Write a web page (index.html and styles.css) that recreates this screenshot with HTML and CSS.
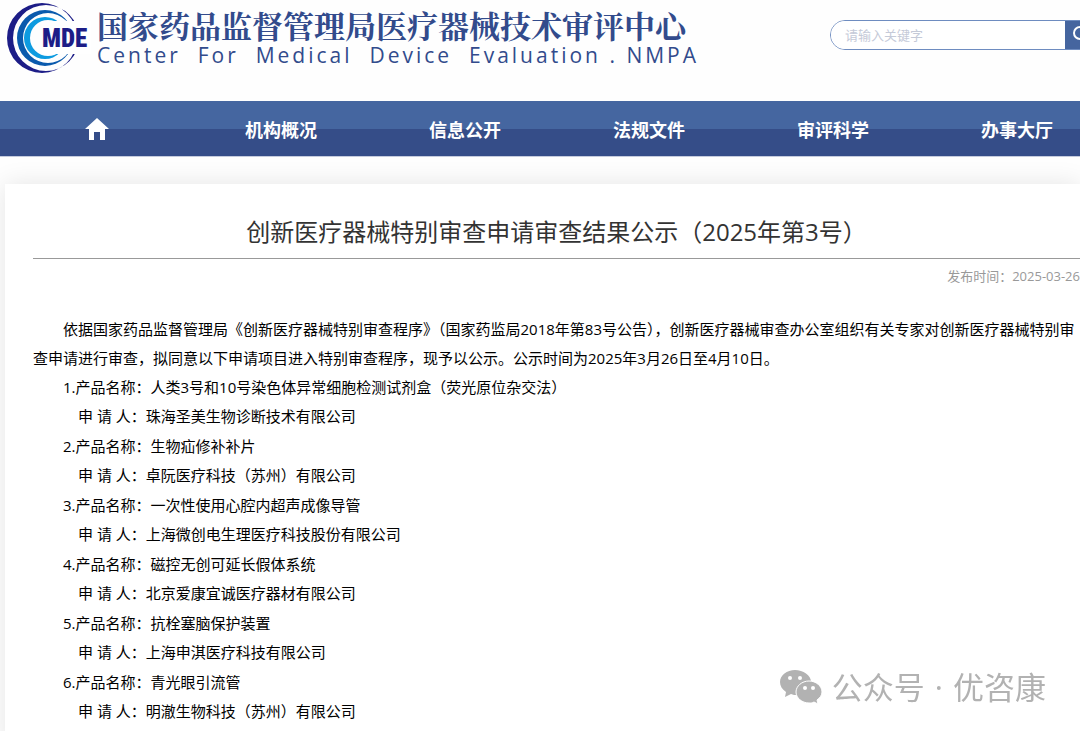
FILE: index.html
```html
<!DOCTYPE html>
<html lang="zh-CN">
<head>
    <meta charset="UTF-8">
    <meta name="viewport" content="width=device-width, initial-scale=1.0">
    <title>创新医疗器械特别审查申请审查结果公示（2025年第3号）</title>
    <link rel="stylesheet" href="styles.css">
</head>
<body>
    <header class="header">
        <a class="brand" href="#">
            <svg class="logo" width="84" height="76" viewBox="0 0 84 76">
                <path fill="#1d1d87" fill-rule="evenodd" d="M35 3a35 35 0 1 0 0 70a35 35 0 1 0 0-70zM39 5a33 33 0 1 1 0 66a33 33 0 1 1 0-66z"/>
                <path fill="#0a5aad" fill-rule="evenodd" d="M38 10a28 28 0 1 0 0 56a28 28 0 1 0 0-56zM41 13a25 25 0 1 1 0 50a25 25 0 1 1 0-50z"/>
                <path fill="#0d9be0" fill-rule="evenodd" d="M38 17a21 21 0 1 0 0 42a21 21 0 1 0 0-42zM41 20a18 18 0 1 1 0 36a18 18 0 1 1 0-36z"/>
                <path fill="#fff" d="M35 21H84V54H35z"/>
                <text class="logo-text" x="35" y="47">MDE</text>
            </svg>
            <span class="brand-names">
                <span class="brand-cn">国家药品监督管理局医疗器械技术审评中心</span>
                <span class="brand-en">Center  For  Medical  Device  Evaluation . NMPA</span>
            </span>
        </a>
        <form class="search">
            <input class="search-input" type="text" placeholder="请输入关键字" aria-label="请输入关键字">
            <button class="search-btn" type="button" aria-label="搜索">
                <svg width="18" height="18" viewBox="0 0 18 18" fill="none" stroke="#fff" stroke-width="2">
                    <circle cx="7" cy="7" r="6"/>
                    <path d="M11 11l6 6"/>
                </svg>
            </button>
        </form>
    </header>

    <nav class="nav">
        <a href="#" aria-label="首页">
            <svg width="24" height="22" viewBox="0 0 24 22" fill="#fff">
                <path d="M12 0L24 11H20V22H15V14H9V22H4V11H0z"/>
            </svg>
        </a>
        <a href="#">机构概况</a>
        <a href="#">信息公开</a>
        <a href="#">法规文件</a>
        <a href="#">审评科学</a>
        <a href="#">办事大厅</a>
    </nav>

    <main class="article">
        <h1 class="title">创新医疗器械特别审查申请审查结果公示（2025年第3号）</h1>
        <p class="date">发布时间：2025-03-26</p>
        <p class="intro">依据国家药品监督管理局《创新医疗器械特别审查程序》（国家药监局2018年第83号公告），创新医疗器械审查办公室组织有关专家对创新医疗器械特别审查申请进行审查，拟同意以下申请项目进入特别审查程序，现予以公示。公示时间为2025年3月26日至4月10日。</p>
        <div class="item">
            <p>1.产品名称：人类3号和10号染色体异常细胞检测试剂盒（荧光原位杂交法）</p>
            <p class="applicant">申 请 人：珠海圣美生物诊断技术有限公司</p>
        </div>
        <div class="item">
            <p>2.产品名称：生物疝修补补片</p>
            <p class="applicant">申 请 人：卓阮医疗科技（苏州）有限公司</p>
        </div>
        <div class="item">
            <p>3.产品名称：一次性使用心腔内超声成像导管</p>
            <p class="applicant">申 请 人：上海微创电生理医疗科技股份有限公司</p>
        </div>
        <div class="item">
            <p>4.产品名称：磁控无创可延长假体系统</p>
            <p class="applicant">申 请 人：北京爱康宜诚医疗器材有限公司</p>
        </div>
        <div class="item">
            <p>5.产品名称：抗栓塞脑保护装置</p>
            <p class="applicant">申 请 人：上海申淇医疗科技有限公司</p>
        </div>
        <div class="item">
            <p>6.产品名称：青光眼引流管</p>
            <p class="applicant">申 请 人：明澈生物科技（苏州）有限公司</p>
        </div>
    </main>

    <div class="watermark">
        <svg width="42" height="36" viewBox="0 0 42 36" fill="#b2b2b2">
            <path d="M15 1C7 1 0 6 0 13c0 4 2 7 6 10l-1 5 6-3c2 1 4 1 6 1 8 0 14-6 14-13S23 1 15 1z"/>
            <path stroke="#fff" stroke-width="1" d="M29 12c-7 0-13 5-13 11s6 11 13 11c2 0 3 0 5-1l4 2-1-4c3-2 5-5 5-8 0-6-6-11-13-11z"/>
            <g fill="#fff">
                <circle cx="10" cy="9" r="2"/>
                <circle cx="20" cy="9" r="2"/>
                <circle cx="25" cy="19" r="2"/>
                <circle cx="33" cy="19" r="2"/>
            </g>
        </svg>
        <span>公众号</span>
        <span>·</span>
        <span>优咨康</span>
    </div>
</body>
</html>
```
FILE: styles.css
```css
* {
    box-sizing: border-box;
}
body {
    margin: 0;
    overflow-x: hidden;
    background-color: #fefefe;
    color: #000;
    font-family: "Open Sans", "Noto Sans CJK SC", sans-serif;
    font-size: 15px;
}
body::-webkit-scrollbar {
    display: none;
}
p, h1 {
    margin: 0;
}
a {
    color: inherit;
    text-decoration: none;
}
.header {
    display: flex;
    justify-content: space-between;
    align-items: flex-start;
    height: 101px;
    padding-left: 7px;
    overflow: hidden;
}
.brand {
    display: flex;
    gap: 6px;
    color: #324b8c;
}
.logo {
    flex: none;
}
.logo-text {
    font-family: "Roboto Condensed", Roboto, sans-serif;
    font-size: 25px;
    font-weight: 900;
    fill: #1d1d87;
}
.brand-names {
    display: flex;
    flex-direction: column;
    padding-top: 6px;
    white-space: pre;
}
.brand-cn {
    font-family: "Noto Serif CJK SC", "Noto Sans CJK SC", serif;
    font-size: 31px;
    font-weight: bold;
    line-height: 38px;
}
.brand-en {
    font-size: 21px;
    line-height: 22px;
    letter-spacing: 3px;
}
.search {
    display: flex;
    flex: none;
    width: 283px;
    height: 30px;
    margin: 20px -33px 0 0;
    border: 1px solid #6e8cc0;
    border-radius: 15px;
    overflow: hidden;
}
.search-input {
    flex: 1;
    min-width: 0;
    padding: 0 14px;
    border: 0;
    background: #fff;
    font: inherit;
    font-size: 13px;
}
.search-input::placeholder {
    color: #c5cad8;
}
.search-btn {
    display: flex;
    align-items: center;
    width: 47px;
    padding: 0 8px;
    border: 0;
    background: #45659f;
}
.nav {
    display: grid;
    grid-template-columns: repeat(6, 184px);
    height: 56px;
    padding-left: 5px;
    overflow: hidden;
    border-bottom: 1px solid #c5cbdd;
    background: linear-gradient(#4566a0 28px, #354d88 28px);
    color: #fff;
    font-size: 18px;
    font-weight: bold;
}
.nav a {
    display: flex;
    justify-content: center;
    align-items: center;
}
.article {
    margin: 27px 0 0 5px;
    padding: 28px 0 20px 28px;
    background: #fff;
    box-shadow: 0 0 24px rgba(0, 0, 0, 0.1);
}
.title {
    padding-bottom: 6px;
    border-bottom: 1px solid #999;
    color: #333;
    font-size: 24px;
    font-weight: normal;
    line-height: 40px;
    text-align: center;
}
.date {
    margin-bottom: 22px;
    color: #999;
    font-size: 13px;
    line-height: 34px;
    text-align: right;
}
.intro,
.item {
    line-height: 29px;
    text-indent: 30px;
}
.item {
    margin-bottom: 1px;
}
.applicant {
    padding-left: 15px;
}
.watermark {
    position: fixed;
    right: 34px;
    bottom: 24px;
    display: flex;
    align-items: center;
    gap: 10px;
    color: #b2b2b2;
    font-size: 31px;
    line-height: 40px;
}
```
